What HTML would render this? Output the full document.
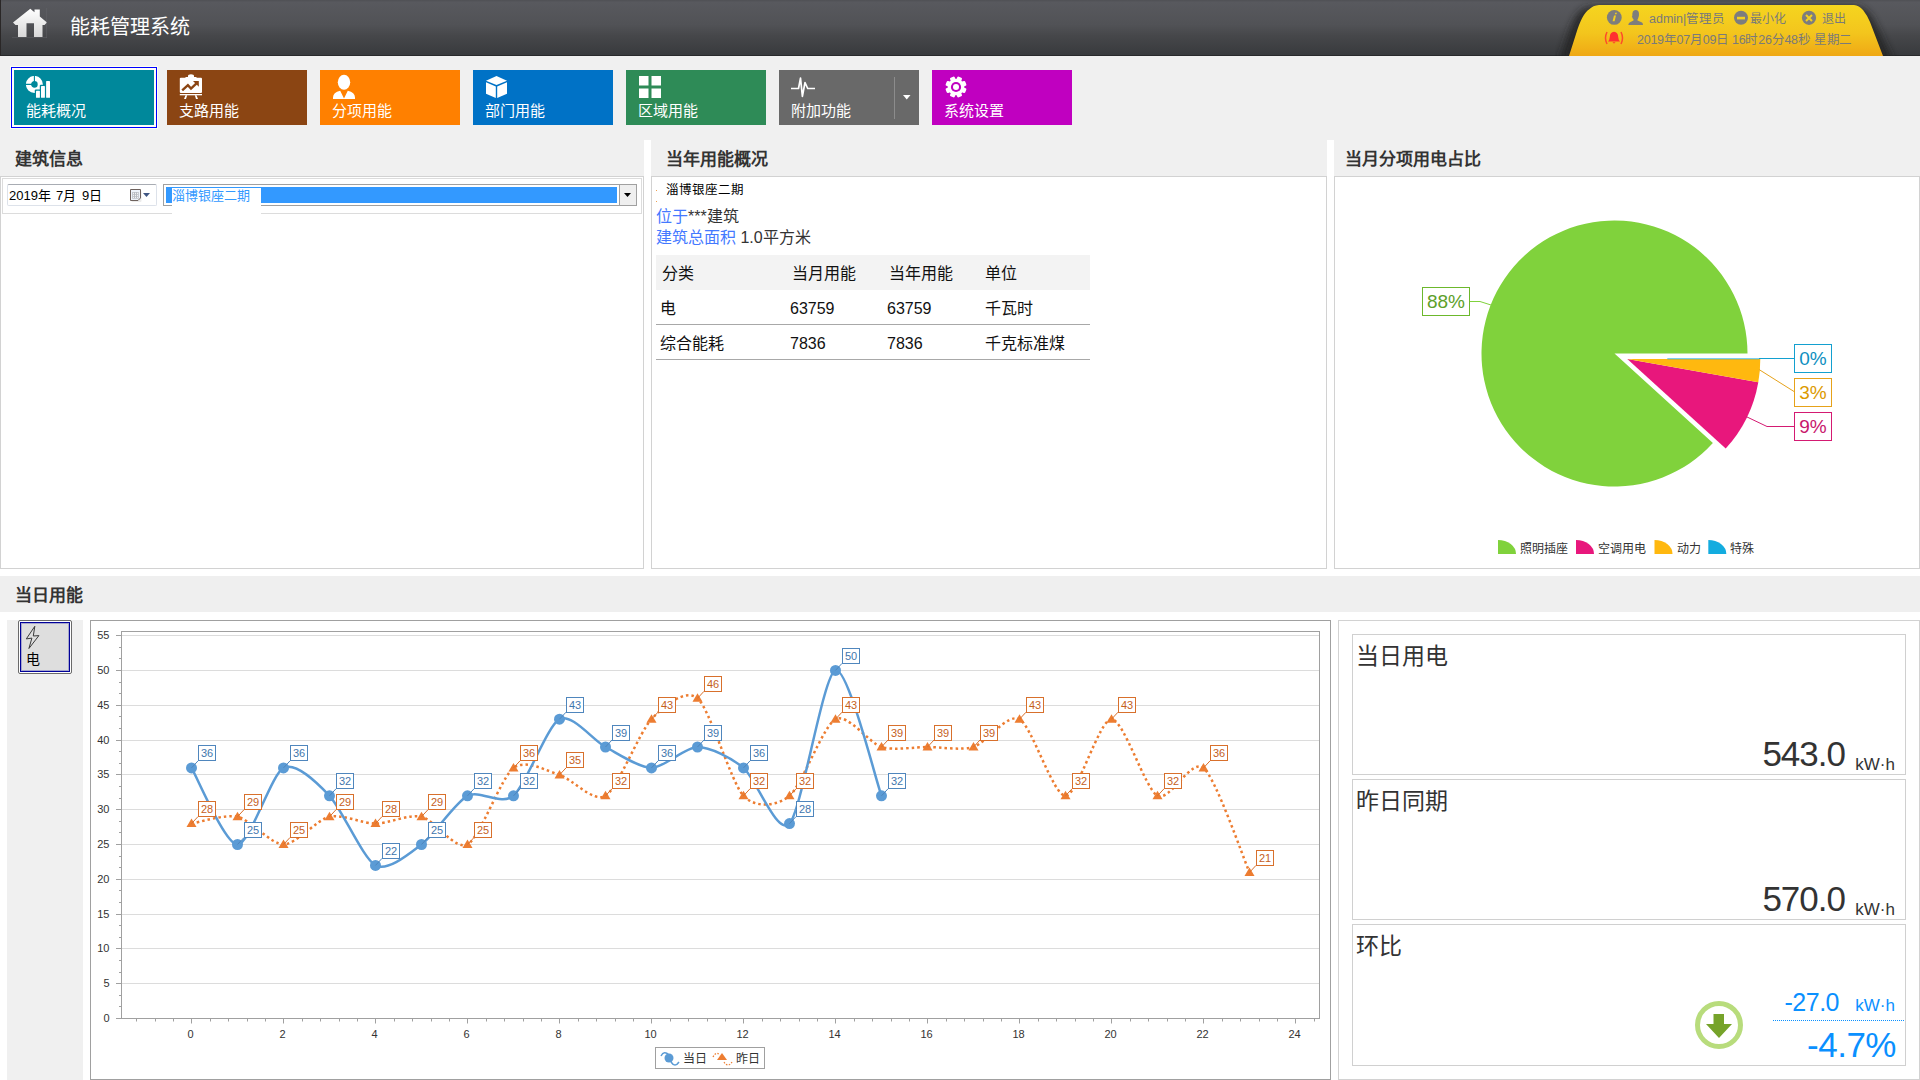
<!DOCTYPE html>
<html lang="zh-CN">
<head>
<meta charset="utf-8">
<title>能耗管理系统</title>
<style>
html,body{margin:0;padding:0;}
body{width:1920px;height:1080px;overflow:hidden;position:relative;background:#f0f0f0;font-family:"Liberation Sans",sans-serif;color:#333;}
.a{position:absolute;}
.t{position:absolute;white-space:nowrap;line-height:1;}
#hdr{left:0;top:0;width:1920px;height:56px;background:linear-gradient(#4f5054,#58595e 4%,#515256 45%,#46474a 65%,#383a3d);border-bottom:1px solid #28292b;box-sizing:border-box;}
.tile{position:absolute;top:70px;width:140px;height:55px;color:#fff;}
.tile .lb{position:absolute;left:12px;top:33px;font-size:15px;line-height:16px;white-space:nowrap;}
.tile svg{position:absolute;left:12px;top:6px;}
.ptitle{position:absolute;top:150px;font-size:17px;font-weight:bold;color:#333;line-height:20px;white-space:nowrap;}
.pbox{position:absolute;top:176px;height:393px;background:#fff;border:1px solid #d2d2d2;box-sizing:border-box;}
.card{position:absolute;left:1352px;width:554px;height:141px;border:1px solid #d0d0d0;box-sizing:border-box;background:#fff;}
.card .ct{position:absolute;left:3px;top:9px;font-size:23px;line-height:24px;color:#333;white-space:nowrap;}
.card .val{position:absolute;right:60px;bottom:0px;font-size:35px;line-height:40px;color:#333;white-space:nowrap;letter-spacing:-1px;}
.card .unit{position:absolute;right:10px;bottom:-1px;font-size:17px;line-height:20px;color:#333;white-space:nowrap;}
table.tb{position:absolute;left:656px;top:255px;border-collapse:collapse;font-size:16px;color:#222;}
</style>
</head>
<body>
<!-- header -->
<div id="hdr" class="a"></div>
<div class="a" style="left:0;top:0;width:1px;height:56px;background:#2a2727"></div>
<svg class="a" style="left:12px;top:8px" width="36" height="30" viewBox="0 0 36 30">
<defs><linearGradient id="hg" x1="0" y1="0" x2="0" y2="1"><stop offset="0" stop-color="#ffffff"/><stop offset="1" stop-color="#d8d8d8"/></linearGradient></defs>
<path d="M1,14.5 L18.3,0.8 L22.5,4.3 V1.5 H27.8 V8.5 L35,14.5 L32.5,17 H30.5 V29 H22 V15.3 H14.5 V29 H6 V17 H3.5 Z" fill="url(#hg)"/>
<path d="M34.5,0 V30 M0,29.5 H35" stroke="#6a6b6f" stroke-width="0.6" fill="none" opacity="0.6"/>
</svg>
<div class="t" style="left:70px;top:17px;font-size:20px;color:#fff;line-height:20px">能耗管理系统</div>

<!-- yellow tab -->
<svg class="a" style="left:1555px;top:0" width="360" height="56" viewBox="0 0 360 56">
<defs><linearGradient id="yg" x1="0" y1="0" x2="0" y2="1"><stop offset="0" stop-color="#f5d51f"/><stop offset="0.55" stop-color="#f3c51d"/><stop offset="1" stop-color="#efa815"/></linearGradient>
<linearGradient id="sg" x1="0" y1="0" x2="0" y2="1"><stop offset="0" stop-color="#505154"/><stop offset="1" stop-color="#252628"/></linearGradient></defs>
<filter id="bl" x="-20%" y="-50%" width="140%" height="200%"><feGaussianBlur stdDeviation="3.5"/></filter><path d="M4,60 L13,34 Q20,12 30,8 Q36,6 46,6 H298 Q306,6 312,11 Q317,16 321,24 L338,60 Z" fill="#202124" opacity="0.8" filter="url(#bl)"/>
<path d="M14,56 L21,34 Q27,14 34,9.5 Q38,5.3 44,5 H299 Q304,5.3 308,10 Q312,15 315,22 L328,56 Z" fill="url(#yg)"/>
</svg>
<!-- tab icons & text -->
<svg class="a" style="left:1606px;top:10px" width="16" height="16"><circle cx="8.3" cy="7.4" r="7.4" fill="#7d7d7d"/><path d="M9.3,2.8 h1.6 l-0.4,1.5 h-1.6z M8,5.6 h2 l-1.4,5.6 h-2z" fill="#f3d020"/></svg>
<svg class="a" style="left:1628px;top:10px" width="16" height="16"><path d="M7.5,0 Q11,0 11,4 Q11,6 10.4,7.5 Q10,9 9.5,9.5 V10.5 L14,12.5 Q15,13.2 15,15 H0.3 Q0.5,13 2,12.3 L5.5,10.5 V9.3 Q4.6,8.8 4.3,7.3 L3.8,7 L4.3,6 Q4,0 7.5,0Z" fill="#7d7d7d"/></svg>
<div class="t" style="left:1649px;top:12px;font-size:12.5px;color:#7a7a7a;line-height:14px">admin|管理员</div>
<svg class="a" style="left:1733px;top:10px" width="16" height="16"><circle cx="8" cy="7.8" r="7" fill="#7d7d7d"/><rect x="4" y="6.8" width="8" height="2.6" fill="#f3d020"/></svg>
<div class="t" style="left:1750px;top:12px;font-size:12px;color:#7a7a7a;line-height:14px">最小化</div>
<svg class="a" style="left:1801px;top:10px" width="16" height="16"><circle cx="8" cy="7.8" r="7.1" fill="#7d7d7d"/><path d="M5,5 L11,11 M11,5 L5,11" stroke="#f3d020" stroke-width="2"/></svg>
<div class="t" style="left:1822px;top:12px;font-size:12px;color:#7a7a7a;line-height:14px">退出</div>
<svg class="a" style="left:1603px;top:30px" width="22" height="16"><path d="M4,2 Q1,8 4,14 M18,2 Q21,8 18,14" stroke="#ff4a2a" stroke-width="1.5" fill="none"/><path d="M11,1.8 Q15,2 15.2,7 Q15.5,10.5 17,11.5 H5 Q6.5,10.5 6.8,7 Q7,2 11,1.8Z M9.5,12.3 Q11,14.5 12.5,12.3Z" fill="#ff3030"/></svg>
<div class="t" style="left:1637px;top:33px;font-size:12.5px;color:#7a7a7a;line-height:14px;letter-spacing:-0.25px">2019年07月09日 16时26分48秒 星期二</div>

<!-- tiles -->
<div class="a" style="left:10px;top:66px;width:148px;height:63px;background:#fdfff2"></div><div class="a" style="left:11px;top:67px;width:146px;height:61px;box-sizing:border-box;border:1px solid #0000ff;background:#fffffa"></div>
<div class="tile" style="left:14px;background:#00889b">
<svg width="26" height="24" viewBox="0 0 26 24" style="left:12px;top:6px"><circle cx="8.4" cy="8.4" r="5.9" fill="none" stroke="#fff" stroke-width="5.2"/><path d="M8.4,8.4 H0 M8.4,8.4 V0" stroke="#00889b" stroke-width="1.1"/><g fill="#00889b"><rect x="8.8" y="13.5" width="6.3" height="10" rx="1"/><rect x="13.8" y="8.8" width="6.3" height="14" rx="1"/></g><g fill="#fff"><rect x="10" y="14.7" width="3.9" height="7.1" rx="0.6"/><rect x="15" y="10" width="3.9" height="11.8" rx="0.6"/><rect x="20.1" y="5" width="3.9" height="16.8" rx="0.6"/></g></svg>
<div class="lb">能耗概况</div></div>
<div class="tile" style="left:167px;background:#8b4513">
<svg width="28" height="28" viewBox="0 0 28 28" style="left:10px;top:2px"><path d="M11,5 V4 q0,-1.8 3,-1.8 q3,0 3,1.8 V5 h2.5 v1 h-11 v-1z" fill="#fff"/><rect x="2.8" y="5.8" width="22.2" height="15.1" rx="1" fill="#fff"/><path d="M5.2,18.4 L10.9,13.2 L14,16.6 L19.5,11.3" stroke="#8b4513" stroke-width="2.4" fill="none"/><path d="M16,9 H21.8 V14.8z" fill="#8b4513"/><rect x="2.8" y="22" width="22.2" height="1.3" fill="#fff"/><path d="M8.5,23.3 L7,27 h2 l1.2,-3.7z M17.8,23.3 l1.2,3.7 h2 l-1.5,-3.7z" fill="#fff"/></svg>
<div class="lb">支路用能</div></div>
<div class="tile" style="left:320px;background:#ff8000">
<svg width="28" height="28" viewBox="0 0 28 28" style="left:11px;top:4px"><ellipse cx="13" cy="8.3" rx="6.2" ry="7.5" fill="#fff"/><path d="M9.2,16.8 L13,24.5 L16.8,16.8 Q24,18.5 24,23.5 V25 H2 V23.5 Q2,18.5 9.2,16.8Z" fill="#fff"/></svg>
<div class="lb">分项用能</div></div>
<div class="tile" style="left:473px;background:#0072c6">
<svg width="26" height="24" viewBox="0 0 26 24" style="left:11px;top:6px"><path d="M12.5,0 L23,4.7 L12.5,9 L2,4.7 Z" fill="#fff"/><path d="M2,6.2 L11.8,10.5 V22 L2,17.8 Z M13.2,10.5 L23,6.2 V17.8 L13.2,22 Z" fill="#fff"/></svg>
<div class="lb">部门用能</div></div>
<div class="tile" style="left:626px;background:#2e8b57">
<svg width="26" height="24" viewBox="0 0 26 24" style="left:12px;top:6px"><rect x="1" y="0" width="9.5" height="9.5" fill="#fff"/><rect x="13.5" y="0" width="9.5" height="9.5" fill="#fff"/><rect x="1" y="12.5" width="9.5" height="9.5" fill="#fff"/><rect x="13.5" y="12.5" width="9.5" height="9.5" fill="#fff"/></svg>
<div class="lb">区域用能</div></div>
<div class="tile" style="left:779px;background:#696969">
<svg width="26" height="22" viewBox="0 0 26 22" style="left:11px"><path d="M1,12.5 H8.5 L10.5,2.2 L12.4,20.4 L15,6.5 L17.7,12.5 H25" stroke="#fff" stroke-width="1.7" fill="none" stroke-linejoin="round"/></svg>
<div class="lb">附加功能</div>
<div class="a" style="left:115px;top:7px;width:1px;height:42px;background:#8c8c8c"></div>
<svg class="a" style="left:124px;top:25px" width="8" height="5"><path d="M0,0 H7.5 L3.75,4.5z" fill="#fff"/></svg>
</div>
<div class="tile" style="left:932px;background:#c000c0">
<svg width="26" height="24" viewBox="0 0 26 24" style="left:11px;top:6px"><g transform="translate(13,11)"><circle r="8.3" fill="#fff"/><g fill="#fff"><rect x="-2.5" y="-10.6" width="5" height="21.2" rx="1.2" transform="rotate(22.5)"/><rect x="-2.5" y="-10.6" width="5" height="21.2" rx="1.2" transform="rotate(67.5)"/><rect x="-2.5" y="-10.6" width="5" height="21.2" rx="1.2" transform="rotate(112.5)"/><rect x="-2.5" y="-10.6" width="5" height="21.2" rx="1.2" transform="rotate(157.5)"/></g><circle r="5.1" fill="#c000c0"/><circle r="3" fill="#fff"/></g></svg>
<div class="lb">系统设置</div></div>

<!-- white splitters background region -->
<div class="a" style="left:0;top:140px;width:1920px;height:436px;background:#fff"></div>
<div class="a" style="left:0;top:140px;width:644px;height:36px;background:#f0f0f0"></div>
<div class="a" style="left:651px;top:140px;width:676px;height:36px;background:#f0f0f0"></div>
<div class="a" style="left:1334px;top:140px;width:586px;height:36px;background:#f0f0f0"></div>

<div class="ptitle" style="left:15px">建筑信息</div>
<div class="ptitle" style="left:666px">当年用能概况</div>
<div class="ptitle" style="left:1345px">当月分项用电占比</div>

<div class="pbox" style="left:0;width:644px;"></div>
<div class="pbox" style="left:651px;width:676px;"></div>
<div class="pbox" style="left:1334px;width:586px;"></div>

<!-- panel 1 toolbar -->
<div class="a" style="left:2px;top:178px;width:640px;height:36px;box-sizing:border-box;border:1px solid #dcdcdc;"></div>
<div class="a" style="left:7px;top:184px;width:150px;height:22px;box-sizing:border-box;border:1px solid #dde2ea;border-top-color:#a8acb3;border-radius:2px;background:#fff"></div>
<div class="t" style="left:9px;top:189px;font-size:13px;color:#000;line-height:14px">2019年</div><div class="t" style="left:56px;top:189px;font-size:13px;color:#000;line-height:14px">7月</div><div class="t" style="left:82px;top:189px;font-size:13px;color:#000;line-height:14px">9日</div>
<svg class="a" style="left:129px;top:188px" width="24" height="16"><rect x="2.5" y="3" width="10" height="11" fill="#000" opacity="0.08" rx="1"/><path d="M1.5,1.5 H11.5 V10 L9,12.5 H1.5Z" fill="#eef3fb" stroke="#6e625e" stroke-width="1"/><rect x="3.2" y="4" width="6.5" height="6.7" fill="#b9bdc5"/><g fill="#fff"><rect x="4" y="4.8" width="1" height="1"/><rect x="6" y="4.8" width="1" height="1"/><rect x="8" y="4.8" width="1" height="1"/><rect x="4" y="6.8" width="1" height="1"/><rect x="6" y="6.8" width="1" height="1"/><rect x="8" y="6.8" width="1" height="1"/><rect x="4" y="8.8" width="1" height="1"/><rect x="6" y="8.8" width="1" height="1"/><rect x="8" y="8.8" width="1" height="1"/></g><path d="M14,5 H21 L17.5,9z" fill="#3f5683"/></svg>
<div class="a" style="left:163px;top:184px;width:474px;height:22px;box-sizing:border-box;border:1px solid #a0a0a0;background:#fff"></div>
<div class="a" style="left:166px;top:187px;width:451px;height:16px;background:#3399ff"></div>
<div class="a" style="left:619px;top:185px;width:17px;height:20px;box-sizing:border-box;border-left:1px solid #a0a0a0;background:#efefef"></div>
<svg class="a" style="left:624px;top:193px" width="8" height="5"><path d="M0,0 H7 L3.5,4z" fill="#000"/></svg>
<div class="a" style="left:172px;top:188px;width:89px;height:26px;background:#fff"></div>
<div class="t" style="left:172px;top:189px;font-size:13px;color:#3399ff;line-height:14px">淄博银座二期</div>

<!-- panel 2 content -->
<div class="t" style="left:666px;top:184px;font-size:12.5px;color:#000;line-height:13px">淄博银座二期</div>
<div class="a" style="left:656px;top:190px;width:1px;height:1px;background:#f0a050"></div>
<div class="a" style="left:656px;top:201px;width:1px;height:1px;background:#f0a050"></div>
<div class="t" style="left:656px;top:209px;font-size:16px;line-height:16px"><span style="color:#4479ff">位于</span><span style="color:#333">***建筑</span></div>
<div class="t" style="left:656px;top:230px;font-size:16px;line-height:16px"><span style="color:#4479ff">建筑总面积</span><span style="color:#333"> 1.0平方米</span></div>
<div class="a" style="left:656px;top:255px;width:434px;height:35px;background:#f3f3f3"></div>
<div class="a" style="left:656px;top:324px;width:434px;height:1px;background:#a8a8a8"></div>
<div class="a" style="left:656px;top:359px;width:434px;height:1px;background:#a8a8a8"></div>
<div class="t" style="left:662px;top:265px;font-size:16px;color:#111;line-height:17px">分类</div>
<div class="t" style="left:792px;top:265px;font-size:16px;color:#111;line-height:17px">当月用能</div>
<div class="t" style="left:889px;top:265px;font-size:16px;color:#111;line-height:17px">当年用能</div>
<div class="t" style="left:985px;top:265px;font-size:16px;color:#111;line-height:17px">单位</div>
<div class="t" style="left:660px;top:300px;font-size:16px;color:#111;line-height:17px">电</div>
<div class="t" style="left:790px;top:300px;font-size:16px;color:#111;line-height:17px">63759</div>
<div class="t" style="left:887px;top:300px;font-size:16px;color:#111;line-height:17px">63759</div>
<div class="t" style="left:985px;top:300px;font-size:16px;color:#111;line-height:17px">千瓦时</div>
<div class="t" style="left:660px;top:335px;font-size:16px;color:#111;line-height:17px">综合能耗</div>
<div class="t" style="left:790px;top:335px;font-size:16px;color:#111;line-height:17px">7836</div>
<div class="t" style="left:887px;top:335px;font-size:16px;color:#111;line-height:17px">7836</div>
<div class="t" style="left:985px;top:335px;font-size:16px;color:#111;line-height:17px">千克标准煤</div>

<!-- panel 3 pie -->
<svg width="586" height="392" style="position:absolute;left:1334px;top:176px" font-family="Liberation Sans, sans-serif">
<path d="M280.5,177.5 L378.9,267.0 A133,133 0 1,1 413.5,177.5 Z" fill="#80d23c"/>
<path d="M293.3,183.1 L424.3,206.2 A133,133 0 0,1 391.7,272.6 Z" fill="#e8177c"/>
<path d="M293.3,183.1 L426.3,183.1 A133,133 0 0,1 424.3,206.2 Z" fill="#ffb80f"/>
<line x1="333.3" y1="182.8" x2="425.3" y2="182.8" stroke="#13a8dc" stroke-width="0.8"/>
<polyline points="157.0,129.0 146.0,125.5 135.0,125.5" fill="none" stroke="#80d23c"/>
<rect x="88.5" y="111.5" width="47" height="28" fill="#fff" stroke="#6cb82c"/>
<text x="112.0" y="132.0" font-size="19" fill="#5da02a" text-anchor="middle">88%</text>
<line x1="425.0" y1="182.5" x2="460.0" y2="182.5" stroke="#13a0d0"/>
<rect x="460.5" y="168.5" width="37" height="28" fill="#fff" stroke="#13a0d0"/>
<text x="479.0" y="189.0" font-size="19" fill="#0e8fbf" text-anchor="middle">0%</text>
<line x1="425.0" y1="193.5" x2="460.0" y2="215.5" stroke="#e6a21a"/>
<rect x="460.5" y="202.5" width="37" height="28" fill="#fff" stroke="#e6a21a"/>
<text x="479.0" y="223.0" font-size="19" fill="#dc9a00" text-anchor="middle">3%</text>
<polyline points="412.0,240.5 433.0,250.5 460.0,250.5" fill="none" stroke="#d41a72"/>
<rect x="460.5" y="236.5" width="37" height="28" fill="#fff" stroke="#d41a72"/>
<text x="479.0" y="257.0" font-size="19" fill="#c8166c" text-anchor="middle">9%</text>
<path d="M164.0,378.0 V364.0 A18,14 0 0,1 182.0,378.0 Z" fill="#80d23c"/>
<text x="186.0" y="377.0" font-size="12" fill="#333">照明插座</text>
<path d="M242.0,378.0 V364.0 A18,14 0 0,1 260.0,378.0 Z" fill="#e8177c"/>
<text x="264.0" y="377.0" font-size="12" fill="#333">空调用电</text>
<path d="M320.5,378.0 V364.0 A18,14 0 0,1 338.5,378.0 Z" fill="#ffb80f"/>
<text x="342.5" y="377.0" font-size="12" fill="#333">动力</text>
<path d="M374.3,378.0 V364.0 A18,14 0 0,1 392.3,378.0 Z" fill="#13acdf"/>
<text x="396.3" y="377.0" font-size="12" fill="#333">特殊</text>
</svg>

<!-- bottom section -->
<div class="a" style="left:0;top:576px;width:1920px;height:36px;background:#efefef"></div>
<div class="t" style="left:15px;top:586px;font-size:17px;font-weight:bold;color:#333;line-height:20px">当日用能</div>
<div class="a" style="left:0;top:612px;width:1920px;height:468px;background:#fff"></div>
<div class="a" style="left:7px;top:620px;width:76px;height:460px;background:#f0f0f0"></div>
<div class="a" style="left:18px;top:620px;width:54px;height:54px;box-sizing:border-box;border:1px solid #6a6a6a;border-radius:2px;background:#fff"></div>
<div class="a" style="left:20px;top:622px;width:50px;height:50px;box-sizing:border-box;border:1px solid #000099;box-shadow:inset 0 0 0 1px rgba(0,0,153,0.25);background:#dedede"></div>
<svg class="a" style="left:25px;top:625px" width="16" height="26"><path d="M9.8,1.3 L1.3,13.9 L6.9,13.1 L3.9,23.5 L13.9,10.6 L8.3,11 Z" fill="none" stroke="#3a3a3a" stroke-width="1" stroke-linejoin="miter"/></svg>
<div class="t" style="left:26px;top:652px;font-size:14px;color:#000;line-height:14px">电</div>

<svg width="1241" height="460" viewBox="0 0 1241 460" style="position:absolute;left:90px;top:620px" font-family="Liberation Sans, sans-serif">
<rect x="0.5" y="0.5" width="1240" height="459" fill="#fff" stroke="#a0a0a0"/>
<line x1="32" x2="1229" y1="398.5" y2="398.5" stroke="#dcdcdc"/>
<line x1="26" x2="31" y1="398.5" y2="398.5" stroke="#a0a0a0"/>
<text x="19.5" y="401.5" font-size="11" fill="#333" text-anchor="end">0</text>
<line x1="32" x2="1229" y1="363.5" y2="363.5" stroke="#dcdcdc"/>
<line x1="26" x2="31" y1="363.5" y2="363.5" stroke="#a0a0a0"/>
<text x="19.5" y="366.5" font-size="11" fill="#333" text-anchor="end">5</text>
<line x1="32" x2="1229" y1="328.5" y2="328.5" stroke="#dcdcdc"/>
<line x1="26" x2="31" y1="328.5" y2="328.5" stroke="#a0a0a0"/>
<text x="19.5" y="331.5" font-size="11" fill="#333" text-anchor="end">10</text>
<line x1="32" x2="1229" y1="294.5" y2="294.5" stroke="#dcdcdc"/>
<line x1="26" x2="31" y1="294.5" y2="294.5" stroke="#a0a0a0"/>
<text x="19.5" y="297.5" font-size="11" fill="#333" text-anchor="end">15</text>
<line x1="32" x2="1229" y1="259.5" y2="259.5" stroke="#dcdcdc"/>
<line x1="26" x2="31" y1="259.5" y2="259.5" stroke="#a0a0a0"/>
<text x="19.5" y="262.5" font-size="11" fill="#333" text-anchor="end">20</text>
<line x1="32" x2="1229" y1="224.5" y2="224.5" stroke="#dcdcdc"/>
<line x1="26" x2="31" y1="224.5" y2="224.5" stroke="#a0a0a0"/>
<text x="19.5" y="227.5" font-size="11" fill="#333" text-anchor="end">25</text>
<line x1="32" x2="1229" y1="189.5" y2="189.5" stroke="#dcdcdc"/>
<line x1="26" x2="31" y1="189.5" y2="189.5" stroke="#a0a0a0"/>
<text x="19.5" y="192.5" font-size="11" fill="#333" text-anchor="end">30</text>
<line x1="32" x2="1229" y1="154.5" y2="154.5" stroke="#dcdcdc"/>
<line x1="26" x2="31" y1="154.5" y2="154.5" stroke="#a0a0a0"/>
<text x="19.5" y="157.5" font-size="11" fill="#333" text-anchor="end">35</text>
<line x1="32" x2="1229" y1="120.5" y2="120.5" stroke="#dcdcdc"/>
<line x1="26" x2="31" y1="120.5" y2="120.5" stroke="#a0a0a0"/>
<text x="19.5" y="123.5" font-size="11" fill="#333" text-anchor="end">40</text>
<line x1="32" x2="1229" y1="85.5" y2="85.5" stroke="#dcdcdc"/>
<line x1="26" x2="31" y1="85.5" y2="85.5" stroke="#a0a0a0"/>
<text x="19.5" y="88.5" font-size="11" fill="#333" text-anchor="end">45</text>
<line x1="32" x2="1229" y1="50.5" y2="50.5" stroke="#dcdcdc"/>
<line x1="26" x2="31" y1="50.5" y2="50.5" stroke="#a0a0a0"/>
<text x="19.5" y="53.5" font-size="11" fill="#333" text-anchor="end">50</text>
<line x1="32" x2="1229" y1="15.5" y2="15.5" stroke="#dcdcdc"/>
<line x1="26" x2="31" y1="15.5" y2="15.5" stroke="#a0a0a0"/>
<text x="19.5" y="18.5" font-size="11" fill="#333" text-anchor="end">55</text>
<line x1="29" x2="31" y1="386.5" y2="386.5" stroke="#a0a0a0"/>
<line x1="29" x2="31" y1="375.5" y2="375.5" stroke="#a0a0a0"/>
<line x1="29" x2="31" y1="352.5" y2="352.5" stroke="#a0a0a0"/>
<line x1="29" x2="31" y1="340.5" y2="340.5" stroke="#a0a0a0"/>
<line x1="29" x2="31" y1="317.5" y2="317.5" stroke="#a0a0a0"/>
<line x1="29" x2="31" y1="305.5" y2="305.5" stroke="#a0a0a0"/>
<line x1="29" x2="31" y1="282.5" y2="282.5" stroke="#a0a0a0"/>
<line x1="29" x2="31" y1="270.5" y2="270.5" stroke="#a0a0a0"/>
<line x1="29" x2="31" y1="247.5" y2="247.5" stroke="#a0a0a0"/>
<line x1="29" x2="31" y1="236.5" y2="236.5" stroke="#a0a0a0"/>
<line x1="29" x2="31" y1="212.5" y2="212.5" stroke="#a0a0a0"/>
<line x1="29" x2="31" y1="201.5" y2="201.5" stroke="#a0a0a0"/>
<line x1="29" x2="31" y1="178.5" y2="178.5" stroke="#a0a0a0"/>
<line x1="29" x2="31" y1="166.5" y2="166.5" stroke="#a0a0a0"/>
<line x1="29" x2="31" y1="143.5" y2="143.5" stroke="#a0a0a0"/>
<line x1="29" x2="31" y1="131.5" y2="131.5" stroke="#a0a0a0"/>
<line x1="29" x2="31" y1="108.5" y2="108.5" stroke="#a0a0a0"/>
<line x1="29" x2="31" y1="96.5" y2="96.5" stroke="#a0a0a0"/>
<line x1="29" x2="31" y1="73.5" y2="73.5" stroke="#a0a0a0"/>
<line x1="29" x2="31" y1="62.5" y2="62.5" stroke="#a0a0a0"/>
<line x1="29" x2="31" y1="38.5" y2="38.5" stroke="#a0a0a0"/>
<line x1="29" x2="31" y1="27.5" y2="27.5" stroke="#a0a0a0"/>
<rect x="31.5" y="11.5" width="1198" height="387" fill="none" stroke="#a0a0a0"/>
<line x1="46.5" x2="46.5" y1="398.5" y2="401.5" stroke="#a0a0a0"/>
<line x1="65.5" x2="65.5" y1="398.5" y2="401.5" stroke="#a0a0a0"/>
<line x1="83.5" x2="83.5" y1="398.5" y2="401.5" stroke="#a0a0a0"/>
<line x1="101.5" x2="101.5" y1="398.5" y2="403.5" stroke="#a0a0a0"/>
<text x="100.5" y="417.5" font-size="11" fill="#333" text-anchor="middle">0</text>
<line x1="120.5" x2="120.5" y1="398.5" y2="401.5" stroke="#a0a0a0"/>
<line x1="138.5" x2="138.5" y1="398.5" y2="401.5" stroke="#a0a0a0"/>
<line x1="157.5" x2="157.5" y1="398.5" y2="401.5" stroke="#a0a0a0"/>
<line x1="175.5" x2="175.5" y1="398.5" y2="401.5" stroke="#a0a0a0"/>
<line x1="193.5" x2="193.5" y1="398.5" y2="403.5" stroke="#a0a0a0"/>
<text x="192.5" y="417.5" font-size="11" fill="#333" text-anchor="middle">2</text>
<line x1="212.5" x2="212.5" y1="398.5" y2="401.5" stroke="#a0a0a0"/>
<line x1="230.5" x2="230.5" y1="398.5" y2="401.5" stroke="#a0a0a0"/>
<line x1="249.5" x2="249.5" y1="398.5" y2="401.5" stroke="#a0a0a0"/>
<line x1="267.5" x2="267.5" y1="398.5" y2="401.5" stroke="#a0a0a0"/>
<line x1="285.5" x2="285.5" y1="398.5" y2="403.5" stroke="#a0a0a0"/>
<text x="284.5" y="417.5" font-size="11" fill="#333" text-anchor="middle">4</text>
<line x1="304.5" x2="304.5" y1="398.5" y2="401.5" stroke="#a0a0a0"/>
<line x1="322.5" x2="322.5" y1="398.5" y2="401.5" stroke="#a0a0a0"/>
<line x1="341.5" x2="341.5" y1="398.5" y2="401.5" stroke="#a0a0a0"/>
<line x1="359.5" x2="359.5" y1="398.5" y2="401.5" stroke="#a0a0a0"/>
<line x1="377.5" x2="377.5" y1="398.5" y2="403.5" stroke="#a0a0a0"/>
<text x="376.5" y="417.5" font-size="11" fill="#333" text-anchor="middle">6</text>
<line x1="396.5" x2="396.5" y1="398.5" y2="401.5" stroke="#a0a0a0"/>
<line x1="414.5" x2="414.5" y1="398.5" y2="401.5" stroke="#a0a0a0"/>
<line x1="433.5" x2="433.5" y1="398.5" y2="401.5" stroke="#a0a0a0"/>
<line x1="451.5" x2="451.5" y1="398.5" y2="401.5" stroke="#a0a0a0"/>
<line x1="469.5" x2="469.5" y1="398.5" y2="403.5" stroke="#a0a0a0"/>
<text x="468.5" y="417.5" font-size="11" fill="#333" text-anchor="middle">8</text>
<line x1="488.5" x2="488.5" y1="398.5" y2="401.5" stroke="#a0a0a0"/>
<line x1="506.5" x2="506.5" y1="398.5" y2="401.5" stroke="#a0a0a0"/>
<line x1="525.5" x2="525.5" y1="398.5" y2="401.5" stroke="#a0a0a0"/>
<line x1="543.5" x2="543.5" y1="398.5" y2="401.5" stroke="#a0a0a0"/>
<line x1="561.5" x2="561.5" y1="398.5" y2="403.5" stroke="#a0a0a0"/>
<text x="560.5" y="417.5" font-size="11" fill="#333" text-anchor="middle">10</text>
<line x1="580.5" x2="580.5" y1="398.5" y2="401.5" stroke="#a0a0a0"/>
<line x1="598.5" x2="598.5" y1="398.5" y2="401.5" stroke="#a0a0a0"/>
<line x1="617.5" x2="617.5" y1="398.5" y2="401.5" stroke="#a0a0a0"/>
<line x1="635.5" x2="635.5" y1="398.5" y2="401.5" stroke="#a0a0a0"/>
<line x1="653.5" x2="653.5" y1="398.5" y2="403.5" stroke="#a0a0a0"/>
<text x="652.5" y="417.5" font-size="11" fill="#333" text-anchor="middle">12</text>
<line x1="672.5" x2="672.5" y1="398.5" y2="401.5" stroke="#a0a0a0"/>
<line x1="690.5" x2="690.5" y1="398.5" y2="401.5" stroke="#a0a0a0"/>
<line x1="709.5" x2="709.5" y1="398.5" y2="401.5" stroke="#a0a0a0"/>
<line x1="727.5" x2="727.5" y1="398.5" y2="401.5" stroke="#a0a0a0"/>
<line x1="745.5" x2="745.5" y1="398.5" y2="403.5" stroke="#a0a0a0"/>
<text x="744.5" y="417.5" font-size="11" fill="#333" text-anchor="middle">14</text>
<line x1="764.5" x2="764.5" y1="398.5" y2="401.5" stroke="#a0a0a0"/>
<line x1="782.5" x2="782.5" y1="398.5" y2="401.5" stroke="#a0a0a0"/>
<line x1="801.5" x2="801.5" y1="398.5" y2="401.5" stroke="#a0a0a0"/>
<line x1="819.5" x2="819.5" y1="398.5" y2="401.5" stroke="#a0a0a0"/>
<line x1="837.5" x2="837.5" y1="398.5" y2="403.5" stroke="#a0a0a0"/>
<text x="836.5" y="417.5" font-size="11" fill="#333" text-anchor="middle">16</text>
<line x1="856.5" x2="856.5" y1="398.5" y2="401.5" stroke="#a0a0a0"/>
<line x1="874.5" x2="874.5" y1="398.5" y2="401.5" stroke="#a0a0a0"/>
<line x1="893.5" x2="893.5" y1="398.5" y2="401.5" stroke="#a0a0a0"/>
<line x1="911.5" x2="911.5" y1="398.5" y2="401.5" stroke="#a0a0a0"/>
<line x1="929.5" x2="929.5" y1="398.5" y2="403.5" stroke="#a0a0a0"/>
<text x="928.5" y="417.5" font-size="11" fill="#333" text-anchor="middle">18</text>
<line x1="948.5" x2="948.5" y1="398.5" y2="401.5" stroke="#a0a0a0"/>
<line x1="966.5" x2="966.5" y1="398.5" y2="401.5" stroke="#a0a0a0"/>
<line x1="985.5" x2="985.5" y1="398.5" y2="401.5" stroke="#a0a0a0"/>
<line x1="1003.5" x2="1003.5" y1="398.5" y2="401.5" stroke="#a0a0a0"/>
<line x1="1021.5" x2="1021.5" y1="398.5" y2="403.5" stroke="#a0a0a0"/>
<text x="1020.5" y="417.5" font-size="11" fill="#333" text-anchor="middle">20</text>
<line x1="1040.5" x2="1040.5" y1="398.5" y2="401.5" stroke="#a0a0a0"/>
<line x1="1058.5" x2="1058.5" y1="398.5" y2="401.5" stroke="#a0a0a0"/>
<line x1="1077.5" x2="1077.5" y1="398.5" y2="401.5" stroke="#a0a0a0"/>
<line x1="1095.5" x2="1095.5" y1="398.5" y2="401.5" stroke="#a0a0a0"/>
<line x1="1113.5" x2="1113.5" y1="398.5" y2="403.5" stroke="#a0a0a0"/>
<text x="1112.5" y="417.5" font-size="11" fill="#333" text-anchor="middle">22</text>
<line x1="1132.5" x2="1132.5" y1="398.5" y2="401.5" stroke="#a0a0a0"/>
<line x1="1150.5" x2="1150.5" y1="398.5" y2="401.5" stroke="#a0a0a0"/>
<line x1="1169.5" x2="1169.5" y1="398.5" y2="401.5" stroke="#a0a0a0"/>
<line x1="1187.5" x2="1187.5" y1="398.5" y2="401.5" stroke="#a0a0a0"/>
<line x1="1205.5" x2="1205.5" y1="398.5" y2="403.5" stroke="#a0a0a0"/>
<text x="1204.5" y="417.5" font-size="11" fill="#333" text-anchor="middle">24</text>
<line x1="1224.5" x2="1224.5" y1="398.5" y2="401.5" stroke="#a0a0a0"/>
<path d="M101.5,203.6 C107.6,202.7 135.2,193.9 147.5,196.7 C159.8,199.4 181.2,224.5 193.5,224.5 C205.8,224.5 227.2,199.4 239.5,196.7 C251.8,193.9 273.2,203.6 285.5,203.6 C297.8,203.6 319.2,193.9 331.5,196.7 C343.8,199.4 365.2,231.0 377.5,224.5 C389.8,218.0 411.2,157.2 423.5,147.9 C435.8,138.6 457.2,151.2 469.5,154.9 C481.8,158.6 503.2,183.2 515.5,175.8 C527.8,168.3 549.2,112.2 561.5,99.2 C573.8,86.2 595.2,68.1 607.5,78.3 C619.8,88.5 641.2,162.8 653.5,175.8 C665.8,188.8 687.2,186.0 699.5,175.8 C711.8,165.6 733.2,105.7 745.5,99.2 C757.8,92.7 779.2,123.3 791.5,127.0 C803.8,130.7 825.2,127.0 837.5,127.0 C849.8,127.0 871.2,130.7 883.5,127.0 C895.8,123.3 917.2,92.7 929.5,99.2 C941.8,105.7 963.2,175.8 975.5,175.8 C987.8,175.8 1009.2,99.2 1021.5,99.2 C1033.8,99.2 1055.2,169.3 1067.5,175.8 C1079.8,182.3 1101.2,137.7 1113.5,147.9 C1125.8,158.1 1153.4,238.4 1159.5,252.4" fill="none" stroke="#ed7d31" stroke-width="2.5" stroke-dasharray="2.5 3"/>
<path d="M101.5,147.9 C107.6,158.1 135.2,224.5 147.5,224.5 C159.8,224.5 181.2,154.4 193.5,147.9 C205.8,141.4 227.2,162.8 239.5,175.8 C251.8,188.8 273.2,238.9 285.5,245.4 C297.8,251.9 319.2,233.8 331.5,224.5 C343.8,215.2 365.2,182.3 377.5,175.8 C389.8,169.3 411.2,186.0 423.5,175.8 C435.8,165.6 457.2,105.7 469.5,99.2 C481.8,92.7 503.2,120.5 515.5,127.0 C527.8,133.5 549.2,147.9 561.5,147.9 C573.8,147.9 595.2,127.0 607.5,127.0 C619.8,127.0 641.2,137.7 653.5,147.9 C665.8,158.1 687.2,216.6 699.5,203.6 C711.8,190.6 733.2,54.1 745.5,50.4 C757.8,46.7 785.4,159.1 791.5,175.8" fill="none" stroke="#5b9bd5" stroke-width="2.5"/>
<path d="M101.5,198.6 L106.5,207.1 L96.5,207.1 Z" fill="#ed7d31"/>
<path d="M147.5,191.7 L152.5,200.2 L142.5,200.2 Z" fill="#ed7d31"/>
<path d="M193.5,219.5 L198.5,228.0 L188.5,228.0 Z" fill="#ed7d31"/>
<path d="M239.5,191.7 L244.5,200.2 L234.5,200.2 Z" fill="#ed7d31"/>
<path d="M285.5,198.6 L290.5,207.1 L280.5,207.1 Z" fill="#ed7d31"/>
<path d="M331.5,191.7 L336.5,200.2 L326.5,200.2 Z" fill="#ed7d31"/>
<path d="M377.5,219.5 L382.5,228.0 L372.5,228.0 Z" fill="#ed7d31"/>
<path d="M423.5,142.9 L428.5,151.4 L418.5,151.4 Z" fill="#ed7d31"/>
<path d="M469.5,149.9 L474.5,158.4 L464.5,158.4 Z" fill="#ed7d31"/>
<path d="M515.5,170.8 L520.5,179.3 L510.5,179.3 Z" fill="#ed7d31"/>
<path d="M561.5,94.2 L566.5,102.7 L556.5,102.7 Z" fill="#ed7d31"/>
<path d="M607.5,73.3 L612.5,81.8 L602.5,81.8 Z" fill="#ed7d31"/>
<path d="M653.5,170.8 L658.5,179.3 L648.5,179.3 Z" fill="#ed7d31"/>
<path d="M699.5,170.8 L704.5,179.3 L694.5,179.3 Z" fill="#ed7d31"/>
<path d="M745.5,94.2 L750.5,102.7 L740.5,102.7 Z" fill="#ed7d31"/>
<path d="M791.5,122.0 L796.5,130.5 L786.5,130.5 Z" fill="#ed7d31"/>
<path d="M837.5,122.0 L842.5,130.5 L832.5,130.5 Z" fill="#ed7d31"/>
<path d="M883.5,122.0 L888.5,130.5 L878.5,130.5 Z" fill="#ed7d31"/>
<path d="M929.5,94.2 L934.5,102.7 L924.5,102.7 Z" fill="#ed7d31"/>
<path d="M975.5,170.8 L980.5,179.3 L970.5,179.3 Z" fill="#ed7d31"/>
<path d="M1021.5,94.2 L1026.5,102.7 L1016.5,102.7 Z" fill="#ed7d31"/>
<path d="M1067.5,170.8 L1072.5,179.3 L1062.5,179.3 Z" fill="#ed7d31"/>
<path d="M1113.5,142.9 L1118.5,151.4 L1108.5,151.4 Z" fill="#ed7d31"/>
<path d="M1159.5,247.4 L1164.5,255.9 L1154.5,255.9 Z" fill="#ed7d31"/>
<circle cx="101.5" cy="147.9" r="5.5" fill="#5b9bd5"/>
<circle cx="147.5" cy="224.5" r="5.5" fill="#5b9bd5"/>
<circle cx="193.5" cy="147.9" r="5.5" fill="#5b9bd5"/>
<circle cx="239.5" cy="175.8" r="5.5" fill="#5b9bd5"/>
<circle cx="285.5" cy="245.4" r="5.5" fill="#5b9bd5"/>
<circle cx="331.5" cy="224.5" r="5.5" fill="#5b9bd5"/>
<circle cx="377.5" cy="175.8" r="5.5" fill="#5b9bd5"/>
<circle cx="423.5" cy="175.8" r="5.5" fill="#5b9bd5"/>
<circle cx="469.5" cy="99.2" r="5.5" fill="#5b9bd5"/>
<circle cx="515.5" cy="127.0" r="5.5" fill="#5b9bd5"/>
<circle cx="561.5" cy="147.9" r="5.5" fill="#5b9bd5"/>
<circle cx="607.5" cy="127.0" r="5.5" fill="#5b9bd5"/>
<circle cx="653.5" cy="147.9" r="5.5" fill="#5b9bd5"/>
<circle cx="699.5" cy="203.6" r="5.5" fill="#5b9bd5"/>
<circle cx="745.5" cy="50.4" r="5.5" fill="#5b9bd5"/>
<circle cx="791.5" cy="175.8" r="5.5" fill="#5b9bd5"/>
<line x1="101.5" y1="203.6" x2="108.0" y2="196.6" stroke="#d8702c"/>
<rect x="108.5" y="181.5" width="17" height="15" fill="#fff" stroke="#d8702c"/>
<text x="117.0" y="192.5" font-size="11" fill="#c5601c" text-anchor="middle">28</text>
<line x1="147.5" y1="196.7" x2="154.0" y2="189.7" stroke="#d8702c"/>
<rect x="154.5" y="174.5" width="17" height="15" fill="#fff" stroke="#d8702c"/>
<text x="163.0" y="185.5" font-size="11" fill="#c5601c" text-anchor="middle">29</text>
<line x1="193.5" y1="224.5" x2="200.0" y2="217.5" stroke="#d8702c"/>
<rect x="200.5" y="202.5" width="17" height="15" fill="#fff" stroke="#d8702c"/>
<text x="209.0" y="213.5" font-size="11" fill="#c5601c" text-anchor="middle">25</text>
<line x1="239.5" y1="196.7" x2="246.0" y2="189.7" stroke="#d8702c"/>
<rect x="246.5" y="174.5" width="17" height="15" fill="#fff" stroke="#d8702c"/>
<text x="255.0" y="185.5" font-size="11" fill="#c5601c" text-anchor="middle">29</text>
<line x1="285.5" y1="203.6" x2="292.0" y2="196.6" stroke="#d8702c"/>
<rect x="292.5" y="181.5" width="17" height="15" fill="#fff" stroke="#d8702c"/>
<text x="301.0" y="192.5" font-size="11" fill="#c5601c" text-anchor="middle">28</text>
<line x1="331.5" y1="196.7" x2="338.0" y2="189.7" stroke="#d8702c"/>
<rect x="338.5" y="174.5" width="17" height="15" fill="#fff" stroke="#d8702c"/>
<text x="347.0" y="185.5" font-size="11" fill="#c5601c" text-anchor="middle">29</text>
<line x1="377.5" y1="224.5" x2="384.0" y2="217.5" stroke="#d8702c"/>
<rect x="384.5" y="202.5" width="17" height="15" fill="#fff" stroke="#d8702c"/>
<text x="393.0" y="213.5" font-size="11" fill="#c5601c" text-anchor="middle">25</text>
<line x1="423.5" y1="147.9" x2="430.0" y2="140.9" stroke="#d8702c"/>
<rect x="430.5" y="125.5" width="17" height="15" fill="#fff" stroke="#d8702c"/>
<text x="439.0" y="136.5" font-size="11" fill="#c5601c" text-anchor="middle">36</text>
<line x1="469.5" y1="154.9" x2="476.0" y2="147.9" stroke="#d8702c"/>
<rect x="476.5" y="132.5" width="17" height="15" fill="#fff" stroke="#d8702c"/>
<text x="485.0" y="143.5" font-size="11" fill="#c5601c" text-anchor="middle">35</text>
<line x1="515.5" y1="175.8" x2="522.0" y2="168.8" stroke="#d8702c"/>
<rect x="522.5" y="153.5" width="17" height="15" fill="#fff" stroke="#d8702c"/>
<text x="531.0" y="164.5" font-size="11" fill="#c5601c" text-anchor="middle">32</text>
<line x1="561.5" y1="99.2" x2="568.0" y2="92.2" stroke="#d8702c"/>
<rect x="568.5" y="77.5" width="17" height="15" fill="#fff" stroke="#d8702c"/>
<text x="577.0" y="88.5" font-size="11" fill="#c5601c" text-anchor="middle">43</text>
<line x1="607.5" y1="78.3" x2="614.0" y2="71.3" stroke="#d8702c"/>
<rect x="614.5" y="56.5" width="17" height="15" fill="#fff" stroke="#d8702c"/>
<text x="623.0" y="67.5" font-size="11" fill="#c5601c" text-anchor="middle">46</text>
<line x1="653.5" y1="175.8" x2="660.0" y2="168.8" stroke="#d8702c"/>
<rect x="660.5" y="153.5" width="17" height="15" fill="#fff" stroke="#d8702c"/>
<text x="669.0" y="164.5" font-size="11" fill="#c5601c" text-anchor="middle">32</text>
<line x1="699.5" y1="175.8" x2="706.0" y2="168.8" stroke="#d8702c"/>
<rect x="706.5" y="153.5" width="17" height="15" fill="#fff" stroke="#d8702c"/>
<text x="715.0" y="164.5" font-size="11" fill="#c5601c" text-anchor="middle">32</text>
<line x1="745.5" y1="99.2" x2="752.0" y2="92.2" stroke="#d8702c"/>
<rect x="752.5" y="77.5" width="17" height="15" fill="#fff" stroke="#d8702c"/>
<text x="761.0" y="88.5" font-size="11" fill="#c5601c" text-anchor="middle">43</text>
<line x1="791.5" y1="127.0" x2="798.0" y2="120.0" stroke="#d8702c"/>
<rect x="798.5" y="105.5" width="17" height="15" fill="#fff" stroke="#d8702c"/>
<text x="807.0" y="116.5" font-size="11" fill="#c5601c" text-anchor="middle">39</text>
<line x1="837.5" y1="127.0" x2="844.0" y2="120.0" stroke="#d8702c"/>
<rect x="844.5" y="105.5" width="17" height="15" fill="#fff" stroke="#d8702c"/>
<text x="853.0" y="116.5" font-size="11" fill="#c5601c" text-anchor="middle">39</text>
<line x1="883.5" y1="127.0" x2="890.0" y2="120.0" stroke="#d8702c"/>
<rect x="890.5" y="105.5" width="17" height="15" fill="#fff" stroke="#d8702c"/>
<text x="899.0" y="116.5" font-size="11" fill="#c5601c" text-anchor="middle">39</text>
<line x1="929.5" y1="99.2" x2="936.0" y2="92.2" stroke="#d8702c"/>
<rect x="936.5" y="77.5" width="17" height="15" fill="#fff" stroke="#d8702c"/>
<text x="945.0" y="88.5" font-size="11" fill="#c5601c" text-anchor="middle">43</text>
<line x1="975.5" y1="175.8" x2="982.0" y2="168.8" stroke="#d8702c"/>
<rect x="982.5" y="153.5" width="17" height="15" fill="#fff" stroke="#d8702c"/>
<text x="991.0" y="164.5" font-size="11" fill="#c5601c" text-anchor="middle">32</text>
<line x1="1021.5" y1="99.2" x2="1028.0" y2="92.2" stroke="#d8702c"/>
<rect x="1028.5" y="77.5" width="17" height="15" fill="#fff" stroke="#d8702c"/>
<text x="1037.0" y="88.5" font-size="11" fill="#c5601c" text-anchor="middle">43</text>
<line x1="1067.5" y1="175.8" x2="1074.0" y2="168.8" stroke="#d8702c"/>
<rect x="1074.5" y="153.5" width="17" height="15" fill="#fff" stroke="#d8702c"/>
<text x="1083.0" y="164.5" font-size="11" fill="#c5601c" text-anchor="middle">32</text>
<line x1="1113.5" y1="147.9" x2="1120.0" y2="140.9" stroke="#d8702c"/>
<rect x="1120.5" y="125.5" width="17" height="15" fill="#fff" stroke="#d8702c"/>
<text x="1129.0" y="136.5" font-size="11" fill="#c5601c" text-anchor="middle">36</text>
<line x1="1159.5" y1="252.4" x2="1166.0" y2="245.4" stroke="#d8702c"/>
<rect x="1166.5" y="230.5" width="17" height="15" fill="#fff" stroke="#d8702c"/>
<text x="1175.0" y="241.5" font-size="11" fill="#c5601c" text-anchor="middle">21</text>
<line x1="101.5" y1="147.9" x2="108.0" y2="140.9" stroke="#4f86bd"/>
<rect x="108.5" y="125.5" width="17" height="15" fill="#fff" stroke="#4f86bd"/>
<text x="117.0" y="136.5" font-size="11" fill="#3f76ad" text-anchor="middle">36</text>
<line x1="147.5" y1="224.5" x2="154.0" y2="217.5" stroke="#4f86bd"/>
<rect x="154.5" y="202.5" width="17" height="15" fill="#fff" stroke="#4f86bd"/>
<text x="163.0" y="213.5" font-size="11" fill="#3f76ad" text-anchor="middle">25</text>
<line x1="193.5" y1="147.9" x2="200.0" y2="140.9" stroke="#4f86bd"/>
<rect x="200.5" y="125.5" width="17" height="15" fill="#fff" stroke="#4f86bd"/>
<text x="209.0" y="136.5" font-size="11" fill="#3f76ad" text-anchor="middle">36</text>
<line x1="239.5" y1="175.8" x2="246.0" y2="168.8" stroke="#4f86bd"/>
<rect x="246.5" y="153.5" width="17" height="15" fill="#fff" stroke="#4f86bd"/>
<text x="255.0" y="164.5" font-size="11" fill="#3f76ad" text-anchor="middle">32</text>
<line x1="285.5" y1="245.4" x2="292.0" y2="238.4" stroke="#4f86bd"/>
<rect x="292.5" y="223.5" width="17" height="15" fill="#fff" stroke="#4f86bd"/>
<text x="301.0" y="234.5" font-size="11" fill="#3f76ad" text-anchor="middle">22</text>
<line x1="331.5" y1="224.5" x2="338.0" y2="217.5" stroke="#4f86bd"/>
<rect x="338.5" y="202.5" width="17" height="15" fill="#fff" stroke="#4f86bd"/>
<text x="347.0" y="213.5" font-size="11" fill="#3f76ad" text-anchor="middle">25</text>
<line x1="377.5" y1="175.8" x2="384.0" y2="168.8" stroke="#4f86bd"/>
<rect x="384.5" y="153.5" width="17" height="15" fill="#fff" stroke="#4f86bd"/>
<text x="393.0" y="164.5" font-size="11" fill="#3f76ad" text-anchor="middle">32</text>
<line x1="423.5" y1="175.8" x2="430.0" y2="168.8" stroke="#4f86bd"/>
<rect x="430.5" y="153.5" width="17" height="15" fill="#fff" stroke="#4f86bd"/>
<text x="439.0" y="164.5" font-size="11" fill="#3f76ad" text-anchor="middle">32</text>
<line x1="469.5" y1="99.2" x2="476.0" y2="92.2" stroke="#4f86bd"/>
<rect x="476.5" y="77.5" width="17" height="15" fill="#fff" stroke="#4f86bd"/>
<text x="485.0" y="88.5" font-size="11" fill="#3f76ad" text-anchor="middle">43</text>
<line x1="515.5" y1="127.0" x2="522.0" y2="120.0" stroke="#4f86bd"/>
<rect x="522.5" y="105.5" width="17" height="15" fill="#fff" stroke="#4f86bd"/>
<text x="531.0" y="116.5" font-size="11" fill="#3f76ad" text-anchor="middle">39</text>
<line x1="561.5" y1="147.9" x2="568.0" y2="140.9" stroke="#4f86bd"/>
<rect x="568.5" y="125.5" width="17" height="15" fill="#fff" stroke="#4f86bd"/>
<text x="577.0" y="136.5" font-size="11" fill="#3f76ad" text-anchor="middle">36</text>
<line x1="607.5" y1="127.0" x2="614.0" y2="120.0" stroke="#4f86bd"/>
<rect x="614.5" y="105.5" width="17" height="15" fill="#fff" stroke="#4f86bd"/>
<text x="623.0" y="116.5" font-size="11" fill="#3f76ad" text-anchor="middle">39</text>
<line x1="653.5" y1="147.9" x2="660.0" y2="140.9" stroke="#4f86bd"/>
<rect x="660.5" y="125.5" width="17" height="15" fill="#fff" stroke="#4f86bd"/>
<text x="669.0" y="136.5" font-size="11" fill="#3f76ad" text-anchor="middle">36</text>
<line x1="699.5" y1="203.6" x2="706.0" y2="196.6" stroke="#4f86bd"/>
<rect x="706.5" y="181.5" width="17" height="15" fill="#fff" stroke="#4f86bd"/>
<text x="715.0" y="192.5" font-size="11" fill="#3f76ad" text-anchor="middle">28</text>
<line x1="745.5" y1="50.4" x2="752.0" y2="43.4" stroke="#4f86bd"/>
<rect x="752.5" y="28.5" width="17" height="15" fill="#fff" stroke="#4f86bd"/>
<text x="761.0" y="39.5" font-size="11" fill="#3f76ad" text-anchor="middle">50</text>
<line x1="791.5" y1="175.8" x2="798.0" y2="168.8" stroke="#4f86bd"/>
<rect x="798.5" y="153.5" width="17" height="15" fill="#fff" stroke="#4f86bd"/>
<text x="807.0" y="164.5" font-size="11" fill="#3f76ad" text-anchor="middle">32</text>
<rect x="565.5" y="427.5" width="109" height="21" fill="#fff" stroke="#a0a0a0"/>
<path d="M571,436 q3,-6 8,-1" fill="none" stroke="#5b9bd5" stroke-width="1.5"/><circle cx="579" cy="438" r="4.5" fill="#5b9bd5"/><path d="M581,442 q4,6 8,0" fill="none" stroke="#5b9bd5" stroke-width="1.5"/>
<text x="593" y="443" font-size="12" fill="#333">当日</text>
<path d="M623,437 q3,-6 7,-2" fill="none" stroke="#ed7d31" stroke-width="1.2" stroke-dasharray="1.5 1.5"/><path d="M632,433 l5,7 h-10z" fill="#ed7d31"/><path d="M634,442 q4,6 8,0" fill="none" stroke="#ed7d31" stroke-width="1.2" stroke-dasharray="1.5 1.5"/>
<text x="646" y="443" font-size="12" fill="#333">昨日</text>
</svg>

<!-- right stats -->
<div class="a" style="left:1338px;top:620px;width:582px;height:460px;box-sizing:border-box;border:1px solid #d2d2d2;background:#fff"></div>
<div class="card" style="top:634px"><div class="ct">当日用电</div><div class="val">543.0</div><div class="unit">kW·h</div></div>
<div class="card" style="top:779px"><div class="ct">昨日同期</div><div class="val">570.0</div><div class="unit">kW·h</div></div>
<div class="card" style="top:924px;height:142px"><div class="ct">环比</div>
<svg class="a" style="left:340px;top:74px" width="52" height="52"><circle cx="26" cy="26" r="21.5" fill="#fff" stroke="#b8dc7c" stroke-width="5"/><path d="M20.5,15 H31 V25 H39 L26,39 L13,25 H20.5Z" fill="#76a32a"/></svg>
<div class="t" style="right:66px;top:63px;font-size:25px;color:#0a90ff;line-height:28px;letter-spacing:-0.5px">-27.0</div>
<div class="t" style="right:10px;top:71px;font-size:17px;color:#0a90ff;line-height:20px">kW·h</div>
<div class="a" style="left:420px;top:95px;width:131px;height:0;border-top:1px dotted #0a90ff"></div>
<div class="t" style="right:9px;top:101px;font-size:35px;color:#0a90ff;line-height:38px;letter-spacing:-0.5px">-4.7%</div>
</div>
</body>
</html>
